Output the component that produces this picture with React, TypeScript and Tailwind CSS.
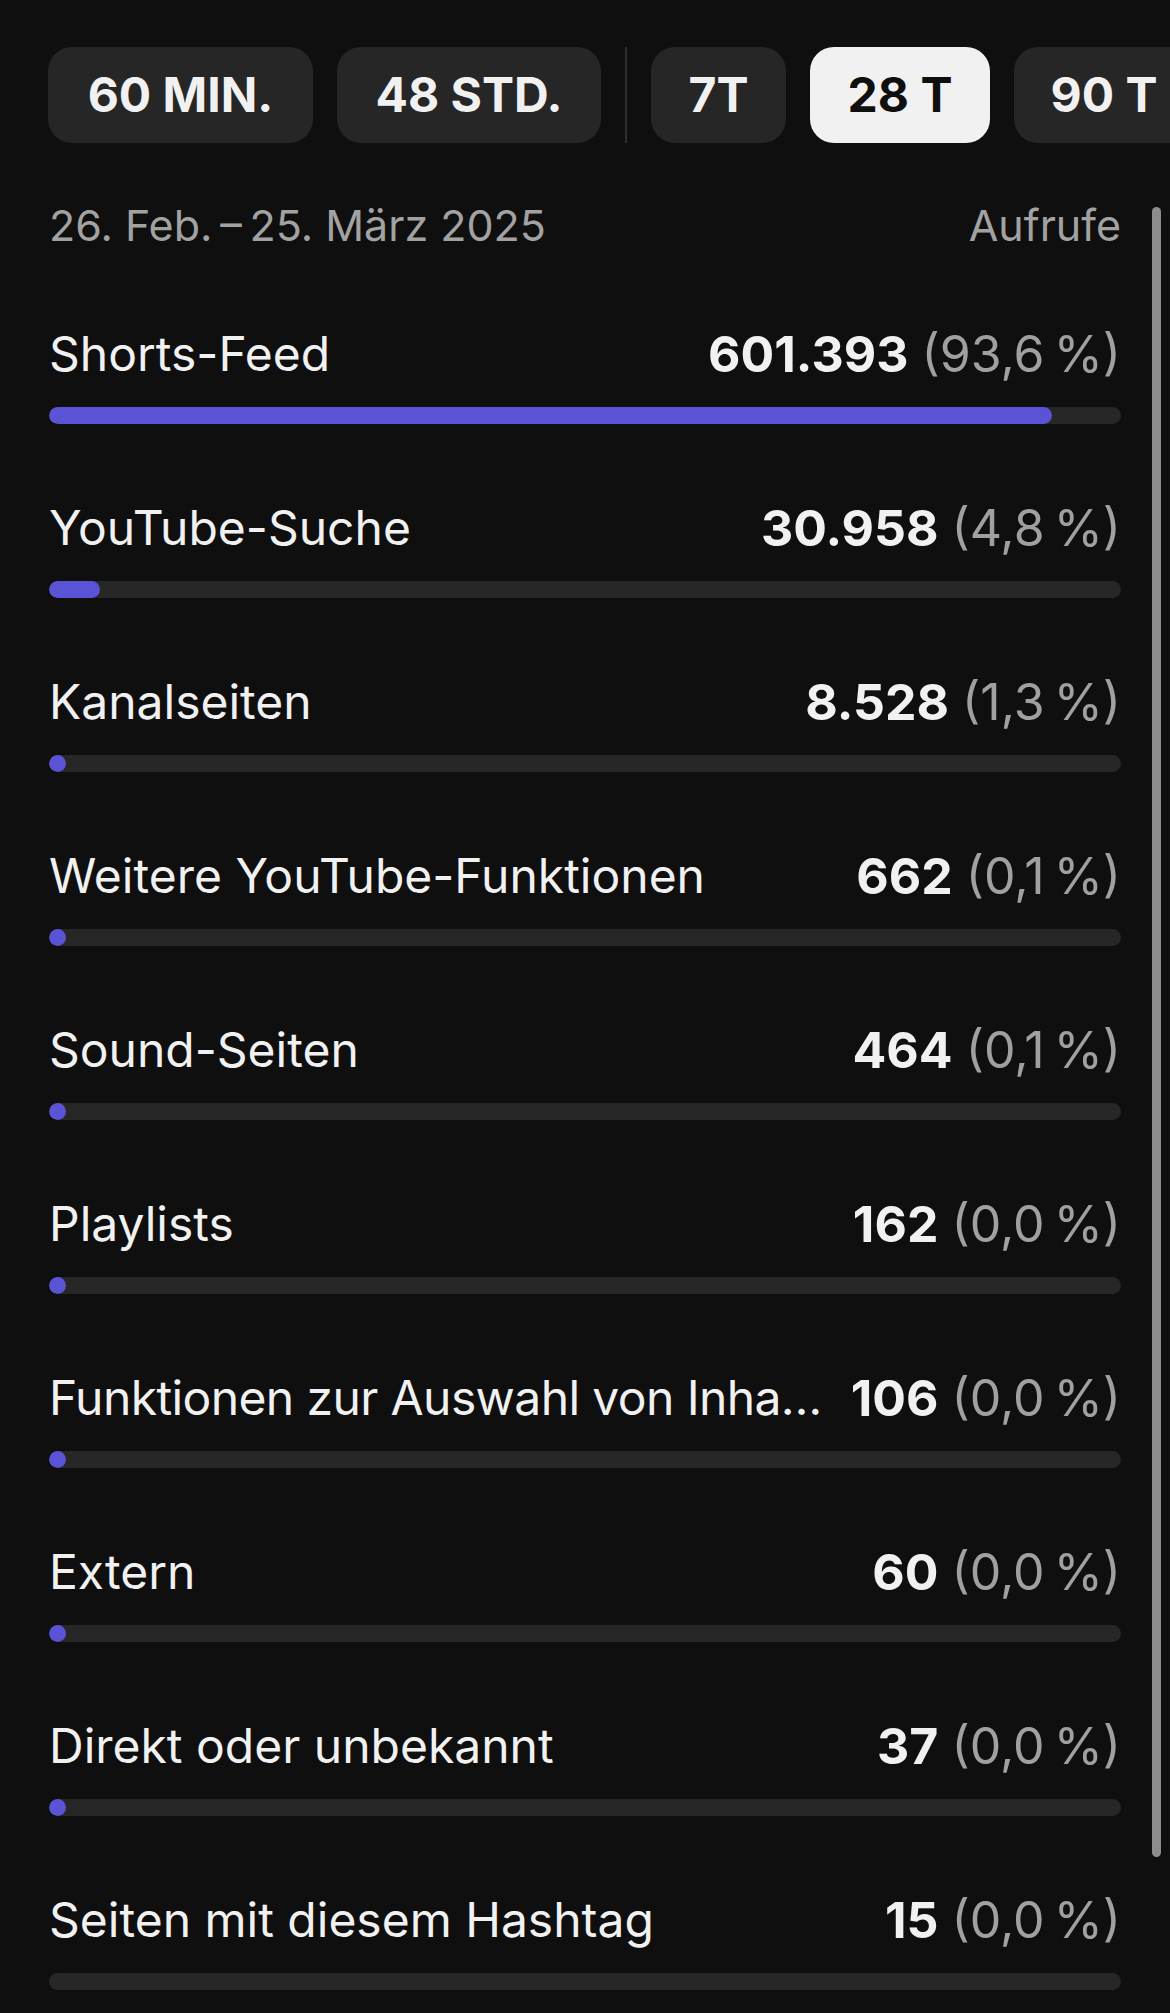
import React from "react";

type Row = { label: string; value: string; pct: string; fill: number | null; tight?: boolean };

const rows: Row[] = [
  { label: "Shorts-Feed", value: "601.393", pct: "(93,6\u202f%)", fill: 93.6 },
  { label: "YouTube-Suche", value: "30.958", pct: "(4,8\u202f%)", fill: 4.8 },
  { label: "Kanalseiten", value: "8.528", pct: "(1,3\u202f%)", fill: 1.3 },
  { label: "Weitere YouTube-Funktionen", value: "662", pct: "(0,1\u202f%)", fill: 0.1 },
  { label: "Sound-Seiten", value: "464", pct: "(0,1\u202f%)", fill: 0.1 },
  { label: "Playlists", value: "162", pct: "(0,0\u202f%)", fill: 0 },
  { label: "Funktionen zur Auswahl von Inha…", value: "106", pct: "(0,0\u202f%)", fill: 0, tight: true },
  { label: "Extern", value: "60", pct: "(0,0\u202f%)", fill: 0 },
  { label: "Direkt oder unbekannt", value: "37", pct: "(0,0\u202f%)", fill: 0 },
  { label: "Seiten mit diesem Hashtag", value: "15", pct: "(0,0\u202f%)", fill: null },
];

function Chip({ label, active, w }: { label: string; active?: boolean; w: string }) {
  return (
    <div
      className={
        "shrink-0 h-[96px] rounded-[24px] flex items-center justify-center text-[48px] font-bold leading-none " +
        w +
        (active ? " bg-[#f1f1f1] text-[#0f0f0f]" : " bg-[#262626] text-[#f1f1f1]")
      }
    >
      {label}
    </div>
  );
}

export default function App() {
  return (
    <div className="relative min-h-[2013px] w-[1170px] bg-[#0f0f0f] font-['Inter',sans-serif] text-[#f1f1f1] overflow-hidden">
      {/* chips */}
      <div className="flex items-stretch gap-[24px] pl-[48px] pt-[47px] overflow-hidden whitespace-nowrap">
        <Chip label="60 MIN." w="w-[265px]" />
        <Chip label="48 STD." w="w-[264px]" />
        <div className="shrink-0 w-[2px] bg-[#2e2e2e]" />
        <Chip label="7T" w="w-[135px]" />
        <Chip label="28 T" active w="w-[180px]" />
        <Chip label="90 T" w="w-[180px]" />
      </div>

      <div className="px-[49px]">
        {/* date header */}
        <div className="mt-[56px] flex items-center justify-between h-[52px] text-[43px] leading-[52px] text-[#a2a2a2]">
          <span>26. Feb.&thinsp;–&thinsp;25. März 2025</span>
          <span>Aufrufe</span>
        </div>

        {/* rows */}
        <div className="mt-[73px] flex flex-col gap-[74px]">
          {rows.map((r) => (
            <div key={r.label} className="flex flex-col">
              <div className="h-[60px] flex items-center gap-[12px] text-[48px] leading-[60px]">
                <div
                  className={
                    "flex-1 min-w-0 whitespace-nowrap" + (r.tight ? " tracking-[-0.6px]" : "")
                  }
                >
                  {r.label}
                </div>
                <div className="shrink-0 flex items-center gap-[13px] whitespace-nowrap text-[50px]">
                  <span className="font-bold">{r.value}</span>
                  <span className="text-[#a0a0a0]">{r.pct}</span>
                </div>
              </div>
              <div className="mt-[23px] h-[17px] rounded-full bg-[#272727] overflow-hidden">
                {r.fill !== null && (
                  <div
                    className="h-full rounded-full bg-[#5b53d6]"
                    style={{ width: `max(${r.fill}%, 17px)` }}
                  />
                )}
              </div>
            </div>
          ))}
        </div>
      </div>

      {/* scrollbar */}
      <div className="absolute left-[1152px] top-[207px] h-[1650px] w-[9px] rounded-full bg-[#8c8c8c]" />
    </div>
  );
}
